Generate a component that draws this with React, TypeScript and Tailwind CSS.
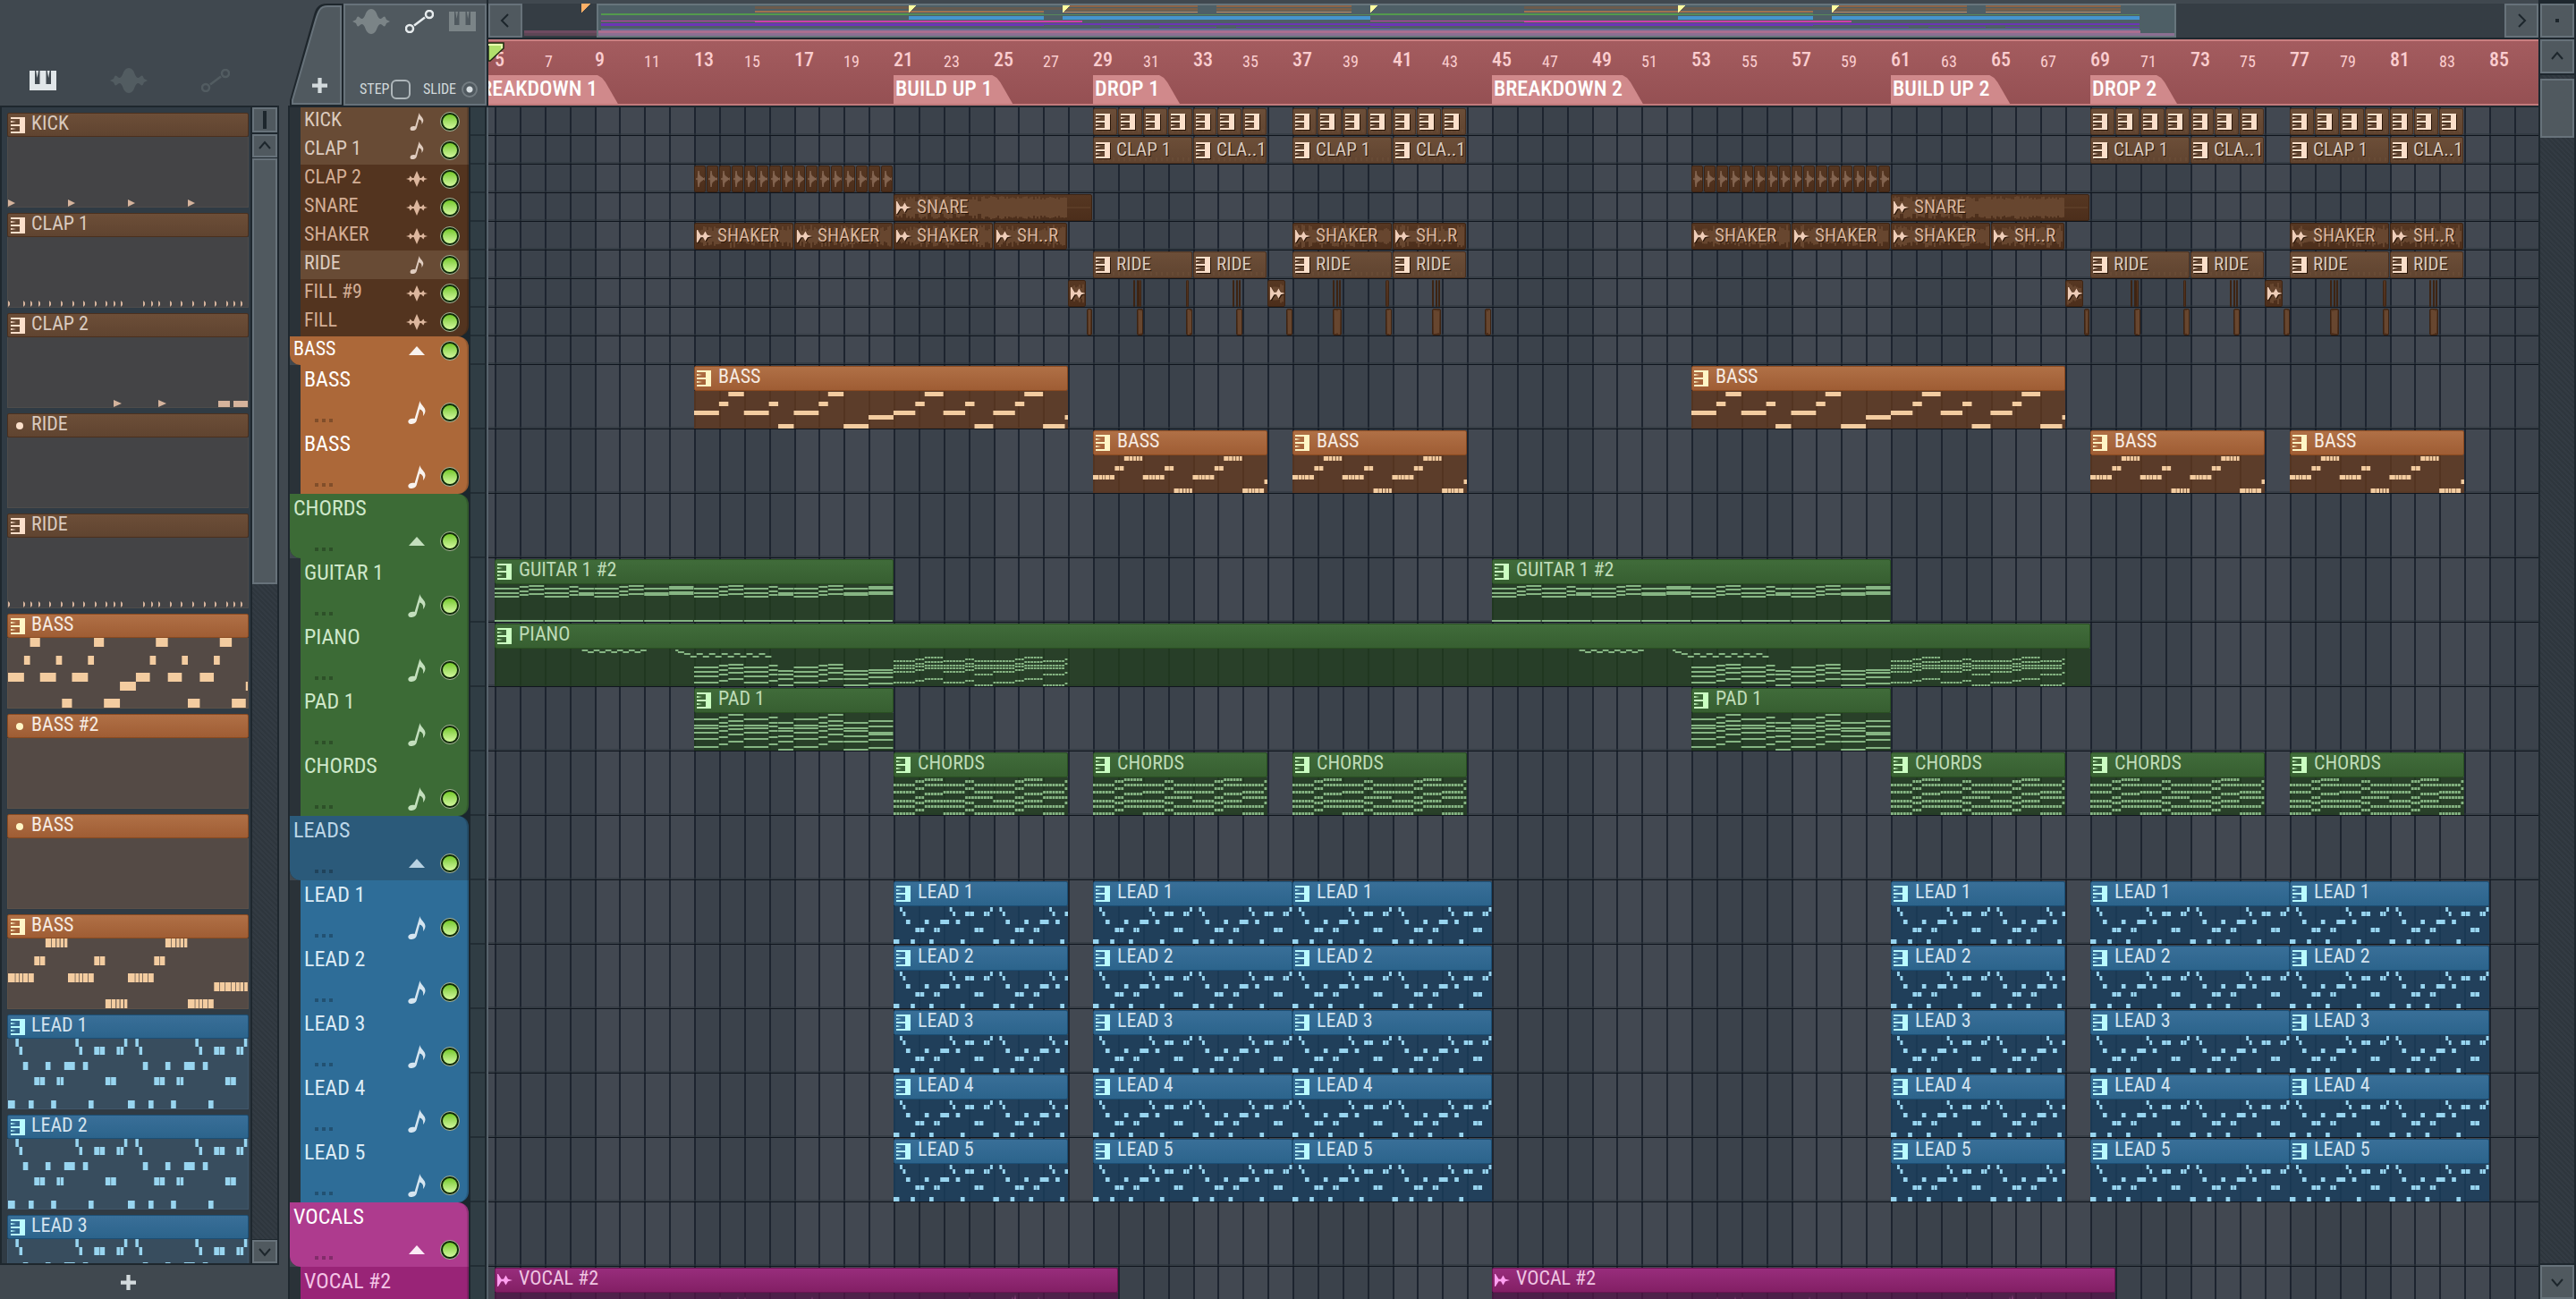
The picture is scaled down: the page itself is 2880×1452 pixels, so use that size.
import React from "react";

const FONT = "font-['Liberation_Sans_Narrow','Roboto_Condensed','DejaVu_Sans_Condensed',Roboto,sans-serif]";

/* ---------- timeline scale ---------- */
const FIRST_BAR = 5;
const LANE_PAD = 7;
const barX = (bar: number) => LANE_PAD + Math.round(((bar - FIRST_BAR) * 223) / 8);

/* ---------- note patterns: [start, length, row] ---------- */
type Note = [number, number, number];
type PatternName = "bassLong" | "bassShort" | "lead" | "guitar" | "pad" | "chords" | "piano";
type Pattern = { bars: number; rows: number; thin?: number; notes: Note[] };

const STEPS: [number, number, "A" | "B" | "C" | "D" | "E"][] = [
  [0, 1, "C"], [1, 0.375, "B"], [1.375, 0.625, "A"], [2, 1, "C"], [3, 0.375, "B"], [3.375, 0.625, "E"],
  [4, 1, "C"], [5, 0.375, "B"], [5.375, 0.625, "A"], [6, 1, "E"], [7, 1, "D"],
];
const STEPS_2: [number, number, "A" | "B" | "C" | "D" | "E"][] = [
  [0, 0.875, "C"], [0.875, 0.375, "B"], [1.25, 0.75, "A"], [2, 0.875, "C"], [2.875, 0.375, "B"], [3.25, 0.75, "E"],
  [4, 0.875, "C"], [4.875, 0.375, "B"], [5.25, 0.75, "A"], [6, 0.875, "E"], [6.875, 0.125, "D"],
];
const ROW = { A: 0, B: 2, C: 4, D: 5, E: 7 };

function chord(steps: typeof STEPS, map: Record<string, number[]>, offset = 0, dashed = false): Note[] {
  const out: Note[] = [];
  steps.forEach(([s, l, k]) =>
    map[k].forEach((y) => {
      if (!dashed) out.push([s + offset, l - 0.02, y]);
      else for (let t = 0; t < l - 0.01; t += 0.125) out.push([s + offset + t, Math.min(0.1, l - t), y]);
    })
  );
  return out;
}

const SEG: Record<string, [number, number][]> = {
  long: [[0, 0.23], [0.25, 0.11], [0.38, 0.1], [0.5, 0.16], [0.68, 0.18]],
  pair: [[0, 0.17], [0.19, 0.17]],
  mid: [[0, 0.19], [0.21, 0.13], [0.37, 0.1], [0.5, 0.1], [0.63, 0.1]],
  tail: [[0, 0.18], [0.2, 0.16], [0.38, 0.18], [0.58, 0.13], [0.73, 0.12], [0.87, 0.11], [1.01, 0.11]],
};
const bassShort: Note[] = (
  [
    [0, "long", 4], [0.875, "pair", 2], [1.25, "mid", 0], [2, "long", 4], [2.875, "pair", 2], [3.25, "mid", 7],
    [4, "long", 4], [4.875, "pair", 2], [5.25, "mid", 0], [6, "long", 7], [6.875, "tail", 5],
  ] as [number, string, number][]
).flatMap(([s, k, r]) => SEG[k].map(([a, l]): Note => [s + a, l, r]));

const leadUnits: Note[] = [
  [4, 2, 0], [36, 2, 0], [62, 2, 0],
  [6, 2, 1], [38, 2, 1], [46, 3, 1], [49, 3, 1], [58, 2, 1], [60, 2, 1],
  [8, 3, 3], [20, 3, 3], [30, 6, 3], [40, 3, 3],
  [14, 3, 5], [17, 3, 5], [26, 2, 5], [28, 2, 5], [52, 3, 5], [55, 3, 5],
  [0, 4, 8], [11, 3, 8], [23, 3, 8], [43, 3, 8],
];
const lead: Note[] = [0, 64].flatMap((o) => leadUnits.map(([s, l, r]): Note => [(s + o) / 16, l / 16 - 0.02, r]));

const guitarMap = { C: [4, 9, 13], B: [2, 7, 11], A: [1, 5, 10], E: [4, 9, 11], D: [2, 4, 8, 10] };
const padMap = {
  C: [6, 13, 16, 21, 28, 37], B: [4, 10, 14, 19, 26, 34], A: [1, 8, 13, 17, 23, 31],
  E: [10, 16, 19, 25, 31, 40], D: [8, 14, 21, 23, 29, 38],
};
const chordMap = { C: [7, 15, 25, 31, 39], B: [3, 11, 21, 27, 35], A: [1, 7, 17, 25, 31], E: [7, 15, 21, 31, 39], D: [3, 11, 21, 27] };
const pianoLow = { C: [20, 25, 30, 37], B: [18, 23, 28, 35], A: [17, 21, 26, 33], E: [24, 28, 33, 40], D: [23, 26, 31, 38] };
const pianoHigh = { C: [13, 18, 21, 25, 37], B: [11, 16, 19, 23, 35], A: [9, 14, 18, 21, 33], E: [13, 18, 21, 28, 40], D: [11, 16, 26, 38] };

const pianoPhrase: Note[] = [
  ...Array.from({ length: 11 }, (_, i): Note => [3.5 + i * 0.235, 0.24, i % 2 ? 3 : 1]),
  [7.25, 0.12, 1], [7.35, 0.25, 3], [7.6, 0.25, 5],
  ...Array.from({ length: 13 }, (_, i): Note => [7.85 + i * 0.25, 0.25, i % 2 ? 5 : 8]),
  ...chord(STEPS, pianoLow, 8),
  ...chord(STEPS_2, pianoHigh, 16, true),
];

const PATTERNS: Record<PatternName, Pattern> = {
  bassLong: {
    bars: 15,
    rows: 8,
    notes: [...STEPS.map(([s, l, k]): Note => [s, l, ROW[k]]), ...STEPS_2.map(([s, l, k]): Note => [s + 8, l, ROW[k]])],
  },
  bassShort: { bars: 8, rows: 8, notes: bassShort },
  lead: { bars: 8, rows: 9, notes: lead },
  guitar: {
    bars: 16,
    rows: 42,
    thin: 2,
    notes: [
      ...chord(STEPS, guitarMap),
      ...chord(STEPS, guitarMap, 8),
      ...Array.from({ length: 8 }, (_, i): Note => [i * 2, 1.96, 40]),
    ],
  },
  pad: { bars: 8, rows: 42, thin: 2, notes: chord(STEPS, padMap) },
  chords: { bars: 7, rows: 42, thin: 3, notes: chord(STEPS_2, chordMap, 0, true) },
  piano: {
    bars: 64,
    rows: 42,
    thin: 2,
    notes: [...pianoPhrase, ...pianoPhrase.map(([s, l, r]): Note => [s + 40, l, r])],
  },
};

function Notes({ name, bars, width, height, fill }: { name: PatternName; bars?: number; width: number; height: number; fill: string }) {
  const p = PATTERNS[name];
  const sx = width / (bars ?? p.bars);
  const sy = height / p.rows;
  return (
    <svg width={width} height={height} viewBox={`0 0 ${width} ${height}`} className="block">
      {p.notes.map(([s, l, r], i) => (
        <rect
          key={i}
          x={s * sx}
          y={p.thin ? Math.round(r * sy) : Math.round(r * sy) + (sy < 6 && r < 7 ? 1 : 0)}
          width={Math.max(1, l * sx)}
          height={p.thin ?? Math.round(sy)}
          fill={fill}
        />
      ))}
    </svg>
  );
}

/* ---------- icons ---------- */
function KeysIcon({ fill, className }: { fill: string; className?: string }) {
  return (
    <svg width="16" height="18" viewBox="0 0 16 18" className={className} aria-hidden>
      <path d="M0 0H16V18H0V16H10V10H0V8H10V2H0Z" fill={fill} />
      <path d="M0 4L6 5L0 6ZM0 12L6 13L0 14Z" fill={fill} />
    </svg>
  );
}
function KeysWide({ fill }: { fill: string }) {
  return (
    <svg width="30" height="22" viewBox="0 0 30 22" aria-hidden>
      <path d="M0 0H6V15H11.5V0H18.5V15H24V0H30V22H0Z" fill={fill} />
      <path d="M7.2 0H10L8.6 8ZM19.8 0H22.6L21.2 8Z" fill={fill} />
    </svg>
  );
}
function WaveIcon({ fill }: { fill: string }) {
  return (
    <svg width="42" height="28" viewBox="0 0 42 28" aria-hidden>
      <path
        d="M0 14L4 12C5 10 5 8.500 6.500 8.500C8 8.500 8.500 11 10.500 11C13.500 11 14.500 5 16 3C17.500 1 19 0 21 0C23 0 24.500 1 26 3C27.500 5 28.500 11 31.500 11C33.500 11 34 8.500 35.500 8.500C37 8.500 37 10 38 12L42 14L38 16C37 18 37 19.500 35.500 19.500C34 19.500 33.500 17 31.500 17C28.500 17 27.500 23 26 25C24.500 27 23 28 21 28C19 28 17.500 27 16 25C14.500 23 13.500 17 10.500 17C8.500 17 8 19.500 6.500 19.500C5 19.500 5 18 4 16Z"
        fill={fill}
      />
    </svg>
  );
}
function CurveIcon({ stroke }: { stroke: string }) {
  return (
    <svg width="32" height="26" viewBox="0 0 32 26" fill="none" stroke={stroke} aria-hidden>
      <circle cx="5" cy="21" r="4" strokeWidth="2.500" />
      <circle cx="27" cy="5" r="4" strokeWidth="2.500" />
      <path d="M10 17.500L22 8.500" strokeWidth="2.500" />
    </svg>
  );
}
function NoteIcon({ fill, large }: { fill: string; large?: boolean }) {
  return (
    <svg width={large ? 20 : 16} height={large ? 26 : 20} viewBox="0 0 20 26" aria-hidden>
      <path d="M13.500 0C13.500 4 19.800 7 19.500 11.500C19.300 14 18 15.800 17 17C17.600 14 17.200 10.800 13.200 9.500L9.800 22C9 25 5.800 26 3.500 26C1.200 26 0 24.500 0.400 22.600C1 20.200 4.500 19 7.600 20Z" fill={fill} />
    </svg>
  );
}
function SmallWave({ fill }: { fill: string }) {
  return (
    <svg width="24" height="18" viewBox="0 0 24 18" aria-hidden>
      <path d="M0 9L3.500 8L4.500 5.500L7 8H8.500L12 0L15.500 8H17L19.500 5.500L20.500 8L24 9L20.500 10L19.500 12.500L17 10H15.500L12 18L8.500 10H7L4.500 12.500L3.500 10Z" fill={fill} />
    </svg>
  );
}
function ClipWave({ fill, className }: { fill: string; className?: string }) {
  return (
    <svg width="17" height="14" viewBox="0 0 17 14" className={className} aria-hidden>
      <path d="M0 0L1 0L4.500 5.800H7L9.500 1.500L12 5.800L17 7L12 8.200L9.500 12.500L7 8.200H4.500L1 14H0Z" fill={fill} />
    </svg>
  );
}
function Plus({ size }: { size: number }) {
  return (
    <svg width={size} height={size} viewBox="0 0 16 16" aria-hidden>
      <path d="M6 0H10V6H16V10H10V16H6V10H0V6H6Z" fill="#d3dadd" />
    </svg>
  );
}
const CHEVRON = { up: "M3 12L9 5L15 12", down: "M3 6L9 13L15 6", left: "M12 2L5 9L12 16", right: "M6 2L13 9L6 16" };
function StepButton({ dir, label, className }: { dir?: keyof typeof CHEVRON; label: string; className: string }) {
  return (
    <button aria-label={label} className={`flex shrink-0 items-center justify-center border-2 border-[#67727a] bg-[#50595f] ${className}`}>
      {dir ? (
        <svg width="18" height="18" viewBox="0 0 18 18" fill="none" stroke="#1d262c" strokeWidth="2">
          <path d={CHEVRON[dir]} />
        </svg>
      ) : (
        <span className="size-1 bg-[#1d262c]" />
      )}
    </button>
  );
}
const HATCH = "bg-[repeating-linear-gradient(45deg,#333b43_0px,#333b43_2px,#2e363d_2px,#2e363d_4px)]";

/* ---------- colour themes ---------- */
type Theme = { head: string; text: string; icon: string; body: string; note: string; pickBody: string };
const THEMES: Record<string, Theme> = {
  perc: {
    head: "bg-linear-to-b from-[#6c4e38] to-[#604430] border-[#4b301e]",
    text: "text-[#d9cabf]", icon: "#fbdfca", body: "", note: "#d5b39c", pickBody: "bg-[#444446] border-[#4e4c4b]",
  },
  audio: {
    head: "bg-linear-to-b from-[#563722] to-[#4c2e1b] border-[#3d2413]",
    text: "text-[#d8b59d]", icon: "#efcdb8", body: "", note: "#6d4b34", pickBody: "bg-[#444446] border-[#4e4c4b]",
  },
  bass: {
    head: "bg-linear-to-b from-[#b07046] to-[#9f5d34] border-[#8a4a20]",
    text: "text-[#f6ebe2]", icon: "#fff6c6", body: "bg-[#663a1e]/75", note: "#f3cca0", pickBody: "bg-[#544a45] border-[#5d5148]",
  },
  chords: {
    head: "bg-linear-to-b from-[#406c3a] to-[#375f31] border-[#2a5022]",
    text: "text-[#bfdcb8]", icon: "#cbffc2", body: "bg-[#213e1c]/75", note: "#86b583", pickBody: "bg-[#384538] border-[#435044]",
  },
  lead: {
    head: "bg-linear-to-b from-[#396f98] to-[#2c648c] border-[#1c4f75]",
    text: "text-[#d3e3ef]", icon: "#b9fbff", body: "bg-[#1a3e5e]/80", note: "#98d5f0", pickBody: "bg-[#384d5e] border-[#40566a]",
  },
  vocal: {
    head: "bg-linear-to-b from-[#982d7c] to-[#831f65] border-[#6c1453]",
    text: "text-[#efc5e2]", icon: "#ff9ff0", body: "bg-[#541448]/75", note: "#e879c9", pickBody: "",
  },
};

/* ---------- pattern picker ---------- */
type PickItem = { name: string; theme: string; dot?: boolean; pattern?: PatternName; hits?: "kick" | "clap" | "clap2" };
const PICKER: PickItem[] = [
  { name: "KICK", theme: "perc", hits: "kick" },
  { name: "CLAP 1", theme: "perc", hits: "clap" },
  { name: "CLAP 2", theme: "perc", hits: "clap2" },
  { name: "RIDE", theme: "perc", dot: true },
  { name: "RIDE", theme: "perc", hits: "clap" },
  { name: "BASS", theme: "bass", pattern: "bassLong" },
  { name: "BASS #2", theme: "bass", dot: true },
  { name: "BASS", theme: "bass", dot: true },
  { name: "BASS", theme: "bass", pattern: "bassShort" },
  { name: "LEAD 1", theme: "lead", pattern: "lead" },
  { name: "LEAD 2", theme: "lead", pattern: "lead" },
  { name: "LEAD 3", theme: "lead", pattern: "lead" },
];
const CLAP_HITS = [0, 17, 25, 34, 46, 59, 72, 84, 97, 109, 118, 126, 151, 160, 168, 181, 193, 206, 219, 231, 244, 252, 260];

function Hits({ kind }: { kind: "kick" | "clap" | "clap2" }) {
  return (
    <svg width="268" height="78" viewBox="0 0 268 78" className="block" fill="#d5b39c">
      {kind === "kick" && [0, 67, 134, 201].map((x) => <path key={x} d={`M${x} 70L${x + 8} 74L${x} 78Z`} />)}
      {kind === "clap" && CLAP_HITS.map((x) => <path key={x} d={`M${x} 71L${x + 2} 73V76L${x} 78Z`} />)}
      {kind === "clap2" && [118, 168].map((x) => <path key={x} d={`M${x} 70L${x + 9} 74L${x} 78Z`} />)}
      {kind === "clap2" && <path d="M235 71H248V78H235ZM252 71H268V78H252Z" />}
    </svg>
  );
}

function PickerItem({ item }: { item: PickItem }) {
  const t = THEMES[item.theme];
  return (
    <li className="mb-1.5 flex shrink-0 flex-col">
      <button className={`flex h-[27px] w-full items-start rounded-xs border ${t.head}`}>
        <span className="flex h-[25px] w-[26px] items-center pl-[3px]">
          {item.dot ? <span className="ml-1.5 size-2 rounded-full" style={{ background: t.icon }} /> : <KeysIcon fill={t.icon} />}
        </span>
        <span className={`text-[22px] leading-[22px] whitespace-nowrap ${t.text}`}>{item.name}</span>
      </button>
      <div className={`h-[79px] overflow-hidden border-x border-b ${t.pickBody}`}>
        {item.hits && <Hits kind={item.hits} />}
        {item.pattern && <Notes name={item.pattern} width={268} height={78} fill={t.note} />}
      </div>
    </li>
  );
}

function Picker() {
  return (
    <aside className="flex w-[312px] shrink-0 flex-col bg-[#40484f]">
      <div className="flex h-[118px] items-end gap-[60px] pb-3.5 pl-[33px]">
        <button aria-label="Patterns" className="flex h-7 w-[30px] items-center"><KeysWide fill="#e1e6e9" /></button>
        <button aria-label="Audio" className="flex h-7 w-[42px] items-center"><WaveIcon fill="#525c61" /></button>
        <button aria-label="Automation" className="flex h-7 w-8 items-center"><CurveIcon stroke="#525c61" /></button>
      </div>
      <div className="flex min-h-0 flex-1 border-2 border-[#1e272e]">
        <ul className="flex min-w-0 flex-1 flex-col overflow-hidden bg-[#303b44] pt-1.5 pr-0.5 pl-1.5">
          {PICKER.map((item, i) => <PickerItem key={i} item={item} />)}
        </ul>
        <div className="flex w-[30px] shrink-0 flex-col gap-0.5 border-l-2 border-[#1e272e] bg-[#1e272e]">
          <button aria-label="Picker size" className="flex h-7 items-center justify-center border-2 border-[#67727a] bg-[#50595f]">
            <span className="h-5 w-1 bg-[#1d262c]" />
          </button>
          <StepButton dir="up" label="Scroll picker up" className="h-[26px] w-full" />
          <div className={`-my-px flex min-h-0 flex-1 flex-col ${HATCH}`}>
            <div className="h-[476px] border-2 border-[#67727a] bg-[#50595f]" />
          </div>
          <StepButton dir="down" label="Scroll picker down" className="h-[26px] w-full" />
        </div>
      </div>
      <div className="flex h-[38px] items-center justify-center pr-[26px]">
        <button aria-label="Add pattern"><Plus size={17} /></button>
      </div>
    </aside>
  );
}

/* ---------- tracks ---------- */
type Clip = { at: number; len: number; label?: string; bare?: boolean };
type Track = {
  name: string;
  group?: boolean;
  small?: boolean;
  audio?: boolean;
  last?: boolean;
  bg: string;
  text: string;
  icon: string;
  theme: string;
  pattern?: PatternName;
  clips?: Clip[];
  wave?: "hit" | "snare" | "shaker" | "solid" | "none";
};

const twice = (clips: Clip[]): Clip[] => [...clips, ...clips.map((c) => ({ ...c, at: c.at + 40 }))];
const c = (at: number, len: number, label?: string): Clip => ({ at, len, label });
const bare = (at: number, len: number): Clip => ({ at, len, bare: true });
const drops = (name: string, short: string): Clip[] =>
  twice([c(29, 4, name), c(33, 3, short), c(37, 4, name), c(41, 3, short)]);

const fillThin = (
  [
    [30.6, 0.09], [30.74, 0.04], [30.84, 0.09], [32.74, 0.1], [34.6, 0.06], [34.74, 0.04], [34.86, 0.06],
    [38.6, 0.08], [38.74, 0.05], [38.86, 0.09], [40.74, 0.12], [42.6, 0.07], [42.74, 0.05], [42.86, 0.06],
  ] as [number, number][]
).map(([a, l]) => bare(a, l));
const fillHits = (
  [[28.75, 0.23], [30.75, 0.25], [32.72, 0.27], [34.74, 0.24], [36.75, 0.24], [38.6, 0.38], [40.73, 0.25], [42.6, 0.37]] as [number, number][]
).map(([a, l]) => bare(a, l));

const P1 = { bg: "bg-[#684b35]", text: "text-[#dccbbf]", icon: "#e0cdc0" };
const P2 = { bg: "bg-[#53341f]", text: "text-[#d3ae95]", icon: "#dcb69d" };
const B = { bg: "bg-[#ac6839]", text: "text-white", icon: "#f8f2ee", theme: "bass" };
const G = { bg: "bg-[#3c6b36]", text: "text-[#cfe8ca]", icon: "#c3dfbd", theme: "chords" };
const L = { bg: "bg-[#2e6d98]", text: "text-[#dcebf5]", icon: "#d5e5f0", theme: "lead" };
const leadClips = twice([c(21, 7), c(29, 8), c(37, 8)]);

const TRACKS: Track[] = [
  {
    name: "KICK", small: true, ...P1, theme: "perc", wave: "none",
    clips: twice([29, 30, 31, 32, 33, 34, 35, 37, 38, 39, 40, 41, 42, 43].map((b) => c(b, 1, ""))),
  },
  { name: "CLAP 1", small: true, ...P1, theme: "perc", wave: "none", clips: drops("CLAP 1", "CLA..1") },
  {
    name: "CLAP 2", small: true, audio: true, ...P2, theme: "audio", wave: "hit",
    clips: twice(Array.from({ length: 16 }, (_, i) => bare(13 + i / 2, 0.5))),
  },
  { name: "SNARE", small: true, audio: true, ...P2, theme: "audio", wave: "snare", clips: twice([c(21, 8, "SNARE")]) },
  {
    name: "SHAKER", small: true, audio: true, ...P2, theme: "audio", wave: "shaker",
    clips: [
      ...twice([c(13, 4, "SHAKER"), c(17, 4, "SHAKER"), c(21, 4, "SHAKER"), c(25, 3, "SH..R")]),
      ...twice([c(37, 4, "SHAKER"), c(41, 3, "SH..R")]),
    ],
  },
  { name: "RIDE", small: true, ...P1, theme: "perc", wave: "none", clips: drops("RIDE", "RIDE") },
  {
    name: "FILL #9", small: true, audio: true, ...P2, theme: "audio", wave: "shaker",
    clips: twice([c(28, 0.75, ""), c(36, 0.75, ""), ...fillThin]),
  },
  { name: "FILL", small: true, audio: true, last: true, ...P2, theme: "audio", wave: "solid", clips: [...twice(fillHits), bare(44.73, 0.25)] },
  { name: "BASS", small: true, group: true, ...B },
  { name: "BASS", ...B, pattern: "bassLong", clips: twice([c(13, 15)]) },
  { name: "BASS", last: true, ...B, pattern: "bassShort", clips: twice([c(29, 7), c(37, 7)]) },
  { name: "CHORDS", group: true, ...G },
  { name: "GUITAR 1", ...G, pattern: "guitar", clips: twice([c(5, 16, "GUITAR 1 #2")]) },
  { name: "PIANO", ...G, pattern: "piano", clips: [c(5, 64)] },
  { name: "PAD 1", ...G, pattern: "pad", clips: twice([c(13, 8)]) },
  { name: "CHORDS", last: true, ...G, pattern: "chords", clips: twice([c(21, 7), c(29, 7), c(37, 7)]) },
  { name: "LEADS", group: true, ...L, bg: "bg-[#2b5a7a]", text: "text-[#bcd6e8]", icon: "#b9d2e2" },
  ...[1, 2, 3, 4, 5].map((n): Track => ({ name: `LEAD ${n}`, last: n === 5, ...L, pattern: "lead", clips: leadClips })),
  { name: "VOCALS", group: true, bg: "bg-[#ae3b8e]", text: "text-white", icon: "#fbeaf6", theme: "vocal" },
  {
    name: "VOCAL #2", audio: true, bg: "bg-[#992477]", text: "text-[#f4c3e6]", icon: "#f4c3e6", theme: "vocal",
    clips: twice([c(5, 25, "VOCAL #2")]),
  },
];

function Led({ name }: { name: string }) {
  return (
    <button
      aria-label={`Mute ${name}`}
      className="size-[22px] shrink-0 rounded-full border border-[#a9b59a] bg-[#0f2a08] p-0.5"
    >
      <span className="block size-full rounded-full bg-linear-to-b from-[#74c822] to-[#d3f89c]" />
    </button>
  );
}

function TrackHead({ t }: { t: Track }) {
  const kind = t.group ? (
    <svg width="18" height="10" viewBox="0 0 18 10"><path d="M9 0L18 10H0Z" fill={t.icon} /></svg>
  ) : t.audio ? (
    <SmallWave fill={t.icon} />
  ) : (
    <NoteIcon fill={t.icon} large={!t.small} />
  );
  return (
    <div className={`flex shrink-0 ${t.small ? "h-8" : "h-[72px]"}`}>
      {!t.group && <div className="w-3 shrink-0 bg-[#2a3238]" />}
      <div className={`min-w-0 flex-1 bg-[#1b262d] ${t.group ? "rounded-bl-xl" : ""}`}>
        <div
          className={`flex h-full justify-between border-r-2 border-r-black/15 pr-2 ${t.bg} ${t.group ? "rounded-tr-xl rounded-bl-xl" : ""} ${t.last ? "rounded-br-xl" : ""}`}
        >
          <div className="flex flex-col justify-between">
            <span className={`pl-1 whitespace-nowrap ${t.text} ${t.small ? "text-[22px] leading-7" : "text-2xl leading-8"}`}>{t.name}</span>
            {!t.small && (
              <button aria-label={`${t.name} options`} className={`mb-2 flex gap-1 ${t.group ? "pl-7" : "pl-4"}`}>
                <span className="size-1 bg-black/25" />
                <span className="size-1 bg-black/25" />
                <span className="size-1 bg-black/25" />
              </button>
            )}
          </div>
          <div className={`flex items-center gap-3.5 ${t.small ? "" : "h-[38px] self-end"}`}>
            <span className="flex w-6 justify-center">{kind}</span>
            <Led name={t.name} />
          </div>
        </div>
      </div>
      <div className="w-5 shrink-0 border-x-2 border-[#1c262d] bg-[#303d44]">
        <div className="h-full border-b-2 border-[#222d34]" />
      </div>
    </div>
  );
}

function wavePath(kind: Track["wave"], width: number, seed: number) {
  let d = "";
  const mid = 15;
  for (let x = 2; x < width - 2; x += 2) {
    const r = Math.abs(Math.sin(x * 12.9898 + seed * 78.233) * 43758.5453) % 1;
    let h = 0;
    if (kind === "snare") {
      const p = x / width;
      h = p < 0.48 ? (x % 14 < 10 ? 9 + r * 4 : 7) : p < 0.87 ? 9 + r * 4 : 0.5;
    } else if (kind === "shaker") h = 6 + r * r * 7;
    else if (kind === "solid") h = 12 + r * 2;
    d += `M${x} ${mid - h}h2v${h * 2}h-2z`;
  }
  return d;
}

function SmallClip({ t, clip, width }: { t: Track; clip: Clip; width: number }) {
  const th = THEMES[t.theme];
  return (
    <div className={`relative h-[30px] w-full overflow-hidden rounded-xs border ${th.head} ${clip.bare && clip.len < 0.2 ? "border-y-0" : ""}`}>
      {t.wave !== "none" && clip.len > 0.1 && (
        <svg width={width} height="30" viewBox={`0 0 ${width} 30`} className="absolute -top-px -left-px" aria-hidden>
          {t.wave === "hit" ? (
            <path d="M2 15H4L5 6L6 11L11 15L13 12V18L11 15L6 19L5 24L4 15Z" fill="#836450" stroke="#836450" strokeWidth="1" />
          ) : (
            <path d={wavePath(t.wave, width, clip.at)} fill="#67462f" />
          )}
        </svg>
      )}
      {t.wave === "none" && (
        <svg width={width} height="4" viewBox={`0 0 ${width} 4`} className="absolute bottom-0.5 left-0" aria-hidden>
          {Array.from({ length: Math.floor(width / 6) }, (_, i) => <path key={i} d={`M${4 + i * 6} 0V4`} stroke="#6f513b" />)}
        </svg>
      )}
      {!clip.bare && (
        <div className="relative flex h-7 items-start">
          <span className={`flex h-7 shrink-0 items-center ${clip.label ? "w-[25px]" : ""} pl-0.5`}>
            {t.audio ? (
              <ClipWave fill={th.icon} className="drop-shadow-[1px_1px_0_#2a1608]" />
            ) : (
              <KeysIcon fill={th.icon} className="drop-shadow-[1px_1px_0_#2a1608]" />
            )}
          </span>
          <span className={`text-[21px] leading-[26px] whitespace-nowrap ${th.text} text-shadow-[1px_1px_0_#2a1608]`}>{clip.label}</span>
        </div>
      )}
    </div>
  );
}

function BigClip({ t, clip, width }: { t: Track; clip: Clip; width: number }) {
  const th = THEMES[t.theme];
  return (
    <div className="w-full overflow-hidden">
      <div className={`flex h-7 items-start overflow-hidden rounded-xs border ${th.head}`}>
        <span className="flex h-[26px] w-[26px] shrink-0 items-center pl-0.5">
          {t.audio ? <ClipWave fill={th.icon} /> : <KeysIcon fill={th.icon} />}
        </span>
        <span className={`text-[22px] leading-[22px] whitespace-nowrap ${th.text}`}>{clip.label ?? t.name}</span>
      </div>
      <div className={`h-[42px] overflow-hidden ${th.body}`}>
        {t.pattern && <Notes name={t.pattern} bars={clip.len} width={width} height={42} fill={th.note} />}
        {!t.pattern && (
          <svg width={width} height="42" viewBox={`0 0 ${width} 42`} aria-hidden>
            {[252, 272, 280, 355, 531, 579, 582, 608].map((x, i) => (
              <path key={x} d={`M${x} ${i === 6 ? 2 : 4}l2 34h-4z`} fill={th.note} />
            ))}
          </svg>
        )}
      </div>
    </div>
  );
}

function Lane({ t }: { t: Track }) {
  return (
    <div className={`relative shrink-0 border-b border-[#10161e] shadow-[inset_0_-2px_0_#2b333c80] ${t.small ? "h-8" : "h-[72px]"}`}>
      {t.clips?.map((clip, i) => {
        const left = barX(clip.at);
        const width = Math.max(2, barX(clip.at + clip.len) - left - (clip.len >= 0.5 && t.small ? 1 : 0));
        return (
          <div key={i} className="absolute top-px" style={{ left, width }}>
            {t.small ? <SmallClip t={t} clip={clip} width={width} /> : <BigClip t={t} clip={clip} width={width} />}
          </div>
        );
      })}
    </div>
  );
}

function BarGrid() {
  const bars = Array.from({ length: 84 }, (_, i) => FIRST_BAR + i);
  return (
    <div className="pointer-events-none absolute inset-0 overflow-hidden bg-[#424851]" aria-hidden>
      {bars.map((b) => (
        <span
          key={b}
          className={`absolute inset-y-0 border-l-2 border-[#1d242f] ${(b - FIRST_BAR) % 8 < 4 ? "bg-[#3b424b]" : "bg-[#424851]"}`}
          style={{ left: barX(b), width: barX(b + 1) - barX(b) }}
        />
      ))}
    </div>
  );
}

/* ---------- header ---------- */
const MAP_X = (bar: number) => 88 + Math.round((bar - 5) * 21.5);
type Strip = [number, number, number, number, string];
const half: Strip[] = [
  [13, 21, 7, 3, "#6d5b4c"], [13, 28, 12, 2, "#a0724f"], [21, 29, 8, 3, "#655a4f"],
  [29, 36, 6, 2, "#8d6447"], [29, 36, 9, 3, "#7a6048"], [29, 36, 13, 1, "#c98d62"],
  [37, 44, 6, 2, "#8d6447"], [37, 44, 9, 3, "#7a6048"], [37, 44, 13, 1, "#c98d62"],
  [5, 21, 15, 2, "#539a4d"], [21, 28, 15, 2, "#57895a"], [28, 45, 16, 1, "#57895a"],
  [21, 28, 18, 4, "#4595cf"], [29, 45, 18, 4, "#4595cf"],
  [5, 13, 23, 1, "#c73fa5"], [13, 30, 23, 2, "#cf3fa8"],
  [5, 45, 26, 2, "#6c35b5"], [5, 28, 28, 1, "#6c35b5"], [31, 33, 30, 1, "#6c35b5"], [34, 37, 30, 1, "#6c35b5"], [38, 46, 30, 1, "#6c35b5"],
  [5, 45, 32, 2, "#5f6f96"],
];
const MINI: Strip[] = [...half, ...half.map(([a, b, y, h, f]): Strip => [a + 40, b + 40, y, h, f])];

function MiniMap() {
  return (
    <div className="relative min-w-0 flex-1 overflow-hidden bg-[#353d44]">
      <div className="absolute inset-y-0 left-[83px] w-[1766px] border-2 border-[#67757c] bg-[#4e5f66]" />
      <svg width="2216" height="38" viewBox="0 4 2216 38" className="absolute top-0 left-0" shapeRendering="crispEdges" aria-hidden>
        <rect x="2" y="34" width="81" height="3" fill="#6e4a60" />
        <rect x="2" y="37" width="81" height="3" fill="#5d4655" />
        <rect x="85" y="34" width="1724" height="3" fill="#a96f90" />
        <rect x="85" y="37" width="1762" height="3" fill="#8c6f92" />
        {MINI.map(([a, b, y, h, f], i) => <rect key={i} x={MAP_X(a)} y={y} width={MAP_X(Math.min(b, 85)) - MAP_X(a)} height={h} fill={f} />)}
        <path d="M66 4H76L66 15Z" fill="#ffb066" />
        {[21, 29, 45, 61, 69].map((b) => <path key={b} d={`M${MAP_X(b)} 6h8l-8 9z`} fill="#ffffa0" />)}
      </svg>
    </div>
  );
}

const MARKERS: [string, number][] = [
  ["BREAKDOWN 1", 3.9], ["BUILD UP 1", 21], ["DROP 1", 29], ["BREAKDOWN 2", 45], ["BUILD UP 2", 61], ["DROP 2", 69],
];
const NUMBERS = Array.from({ length: 41 }, (_, i) => FIRST_BAR + i * 2);

function Ruler() {
  return (
    <div className="relative min-w-0 flex-1 overflow-hidden border-y-2 border-t-[#c97f80] border-b-[#c27a7c] bg-linear-to-b from-[#a45c5f] to-[#955053]">
      {NUMBERS.map((n) => (
        <span
          key={n}
          className={`absolute top-0 text-[#fbcdcf] ${(n - FIRST_BAR) % 4 === 0 ? "text-[22px] leading-[42px] font-medium" : "text-lg leading-[46px]"}`}
          style={{ left: barX(n) }}
        >
          {n}
        </span>
      ))}
      {MARKERS.map(([label, bar]) => (
        <span
          key={label}
          className="absolute -bottom-0.5 h-[34px] border-b-2 border-[#ecabad] bg-[#d0898b] pr-6 pl-0.5 text-2xl leading-[30px] font-medium whitespace-nowrap text-white [clip-path:polygon(0_0,calc(100%-24px)_0,calc(100%-19px)_3px,calc(100%-15px)_8px,100%_100%,0_100%)]"
          style={{ left: barX(bar) }}
        >
          {label}
        </span>
      ))}
      <svg width="20" height="24" viewBox="0 0 20 24" className="absolute top-0 left-0" aria-hidden>
        <path d="M0 2H17V8L2 22H0Z" fill="#b2e06c" stroke="#1f2a12" strokeWidth="1.500" />
        <path d="M0 4H15V8" fill="none" stroke="#eaffb0" strokeWidth="2" />
      </svg>
    </div>
  );
}

function Toolbar() {
  return (
    <div className="flex w-[222px] shrink-0 pt-1">
      <button aria-label="Add track" className="relative flex w-[62px] items-end justify-center pb-[14px] pl-2">
        <svg width="62" height="114" viewBox="0 0 62 114" className="absolute inset-0" aria-hidden>
          <path d="M2 114V108L28 16C31 5 33 0 44 0H62V114Z" fill="#1e262c" />
          <path d="M5 112V108L31 18C34 8 36 3 44 3H59V112Z" fill="#50595f" stroke="#67727a" strokeWidth="2" />
        </svg>
        <span className="relative"><Plus size={17} /></span>
      </button>
      <div className="flex min-w-0 flex-1 flex-col justify-between border-2 border-[#67727a] bg-[#50595f] px-2 py-1">
        <div className="flex items-center justify-between pr-0.5">
          <button aria-label="Audio clips"><WaveIcon fill="#7b8487" /></button>
          <button aria-label="Automation clips"><CurveIcon stroke="#e7ecee" /></button>
          <button aria-label="Pattern clips"><KeysWide fill="#7b8487" /></button>
        </div>
        <div className="flex items-center justify-between pl-2 text-base text-[#d2d9dc]">
          <label className="flex items-center gap-0.5">
            STEP
            <input type="checkbox" className="size-[22px] appearance-none rounded-md border-2 border-[#aeb6ba]" />
          </label>
          <label className="flex items-center gap-1.5">
            SLIDE
            <input type="radio" defaultChecked className="size-[18px] appearance-none rounded-full border-2 border-[#737c81] bg-[radial-gradient(circle,#d7dee1_3px,transparent_4px)]" />
          </label>
        </div>
      </div>
    </div>
  );
}

export default function App() {
  return (
    <div className={`flex h-screen w-full overflow-hidden bg-[#40484f] ${FONT}`}>
      <Picker />
      <main className="flex min-w-0 flex-1 flex-col pl-2.5">
        <header className="flex h-[118px] shrink-0">
          <Toolbar />
          <div className="flex min-w-0 flex-1 flex-col border-l-2 border-[#1e272e] pt-1">
            <div className="flex h-[38px] shrink-0">
              <StepButton dir="left" label="Scroll left" className="w-[38px]" />
              <MiniMap />
              <StepButton dir="right" label="Scroll right" className="w-[38px]" />
            </div>
            <div className="h-0.5 shrink-0 bg-[#1e272e]" />
            <Ruler />
          </div>
        </header>
        <div className="flex min-h-0 flex-1 overflow-hidden border-t-2 border-l-2 border-[#1e272e]">
          <div className="flex w-[220px] shrink-0 flex-col">
            {TRACKS.map((t, i) => <TrackHead key={i} t={t} />)}
          </div>
          <div className="relative flex min-w-0 flex-1 flex-col overflow-hidden border-l-2 border-[#56616a]">
            <BarGrid />
            {TRACKS.map((t, i) => <Lane key={i} t={t} />)}
          </div>
        </div>
      </main>
      <div className="flex w-[42px] shrink-0 flex-col gap-0.5 border-x-2 border-[#1e272e] bg-[#1e272e] pt-1">
        <StepButton label="Playlist menu" className="h-[38px] w-full" />
        <StepButton dir="up" label="Scroll up" className="h-[38px] w-full" />
        <div className={`flex min-h-0 flex-1 flex-col pt-1 ${HATCH}`}>
          <div className="h-[66px] border-2 border-[#67727a] bg-[#50595f]" />
        </div>
        <StepButton dir="down" label="Scroll down" className="h-[38px] w-full" />
      </div>
    </div>
  );
}
